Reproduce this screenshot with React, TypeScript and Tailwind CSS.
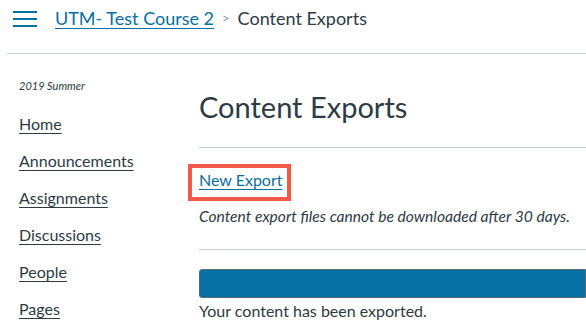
import React from 'react';

const navItems = ['Home', 'Announcements', 'Assignments', 'Discussions', 'People', 'Pages'];

export default function App() {
  return (
    <div className="h-[334px] w-[586px] overflow-hidden bg-white text-[#2d3b45]" style={{ fontFamily: 'Lato, "Noto Sans", sans-serif' }}>
      {/* Header */}
      <div className="flex h-[53px] items-start pl-[13px] pt-[6px]">
        <button className="mt-[4px] flex h-[18px] w-[24px] flex-col justify-between py-[1px]" aria-label="Menu">
          <span className="block h-[2px] w-full bg-[#0770a3]" />
          <span className="block h-[2px] w-full bg-[#0770a3]" />
          <span className="block h-[2px] w-full bg-[#0770a3]" />
        </button>
        <nav className="ml-[18px] flex items-center text-[18px] leading-[24px]">
          <a href="#" className="text-[#0770a3] underline underline-offset-[3px]">UTM- Test Course 2</a>
          <span className="mx-[8px] text-[13px] text-[#8b969e]">&gt;</span>
          <span>Content Exports</span>
        </nav>
      </div>
      <div className="ml-[7px] border-t border-[#c7cdd1]" />

      <div className="flex">
        {/* Sidebar */}
        <aside className="w-[199px] shrink-0 pl-[19px] pt-[25px]">
          <div className="text-[11px] italic leading-[14px] text-[#2d3b45]">2019 Summer</div>
          <ul className="mt-[12px]">
            {navItems.map((item) => (
              <li key={item} className="h-[37px] text-[16px] leading-[37px]">
                <a href="#" className="underline underline-offset-[3px]">{item}</a>
              </li>
            ))}
          </ul>
        </aside>

        {/* Main */}
        <main className="flex-1 pt-[35px]">
          <h1 className="text-[29px] leading-[36px]">Content Exports</h1>
          <div className="mt-[22px] border-t border-[#c7cdd1]" />
          <div className="mt-[18px] h-[28px] leading-[28px]">
            <span className="relative inline-block">
              <a href="#" className="text-[16px] text-[#0770a3] underline underline-offset-[3px]">New Export</a>
              <span className="pointer-events-none absolute -left-[11px] -right-[9px] -top-[2px] -bottom-[7px] border-[4px] border-[#f2594b]" />
            </span>
          </div>
          <p className="mt-[12px] text-[15.6px] italic leading-[20px]">Content export files cannot be downloaded after 30 days.</p>
          <div className="mt-[23px] border-t border-[#c7cdd1]" />
          <div className="mt-[19px] h-[29px] rounded-l-[3px] border border-[#5a6a75] bg-[#0770a3]" />
          <p className="mt-[3px] text-[16px] leading-[20px]">Your content has been exported.</p>
        </main>
      </div>
    </div>
  );
}
